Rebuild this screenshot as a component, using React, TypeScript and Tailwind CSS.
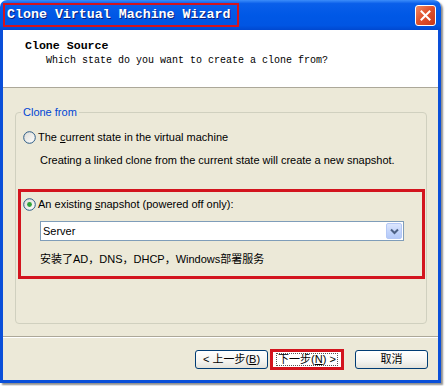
import React from "react";

function Radio({ checked }: { checked?: boolean }) {
  return (
    <svg width="13" height="13" viewBox="0 0 13 13" className="shrink-0">
      <defs>
        <linearGradient id={checked ? "rg1" : "rg0"} x1="0" y1="0" x2="1" y2="1">
          <stop offset="0" stopColor="#DCDBD5" />
          <stop offset="1" stopColor="#FFFFFF" />
        </linearGradient>
      </defs>
      <circle cx="6.5" cy="6.5" r="5.8" fill={`url(#${checked ? "rg1" : "rg0"})`} stroke="#2A5A85" strokeWidth="1" />
      {checked && <circle cx="6.5" cy="6.5" r="2.4" fill="#2FA33A" />}
    </svg>
  );
}

export default function App() {
  return (
    <div className="w-[445px] h-[386px] bg-white font-['Liberation_Sans','Noto_Sans_CJK_SC',sans-serif] text-black">
      <div className="w-[441px] h-[383px] flex flex-col rounded-t-[7px] overflow-hidden shadow-[2px_2px_2px_rgba(0,0,0,0.45)]">
        {/* Title bar */}
        <div className="h-[30px] shrink-0 flex items-start bg-[linear-gradient(to_bottom,#3C8DFA_0%,#0A5FEA_12%,#0058E6_50%,#0055E3_85%,#0048D0_100%)]">
          <div className="ml-[3px] mt-[3px] w-[236px] h-[24px] border-[2px] border-[#D3141E] flex items-center pl-[2px]">
            <span className="font-['Liberation_Mono',monospace] font-bold text-[13.3px] leading-none text-white [text-shadow:1px_1px_0_#0A1E7A]">
              Clone Virtual Machine Wizard
            </span>
          </div>
          <div className="ml-auto mr-[5px] mt-[5px] w-[21px] h-[21px] rounded-[3px] border border-white bg-[linear-gradient(135deg,#F08A64_0%,#E0532E_45%,#C8381A_100%)] flex items-center justify-center">
            <svg width="11" height="11" viewBox="0 0 11 11">
              <path d="M1.5 1.5 L9.5 9.5 M9.5 1.5 L1.5 9.5" stroke="white" strokeWidth="2" strokeLinecap="square" />
            </svg>
          </div>
        </div>

        {/* Client */}
        <div className="flex-1 flex flex-col border-x-[3px] border-b-[3px] border-[#0A4FD9]">
          {/* Header */}
          <div className="h-[58px] shrink-0 bg-white border-b border-[#ACA899] pl-[22px] pt-[9px]">
            <div className="font-['Liberation_Mono',monospace] font-bold text-[11.6px] leading-[14px]">Clone Source</div>
            <div className="ml-[21px] mt-[2px] font-['Liberation_Mono',monospace] text-[10px] leading-[12px]">
              Which state do you want to create a clone from?
            </div>
          </div>

          {/* Body */}
          <div className="flex-1 bg-[#ECE9D8] flex flex-col">
            <div className="relative mt-[24px] ml-[12px] w-[412px] h-[212px] shrink-0 border border-[#D0D0BF] rounded-[4px] px-[2px]">
              <div className="absolute top-[-8px] left-[5px] px-[2px] bg-[#ECE9D8] text-[#0046D5] text-[11px] leading-[14px]">
                Clone from
              </div>
              <div className="mt-[18px] pl-[5px] flex items-center h-[13px]">
                <Radio />
                <span className="ml-[2px] text-[11px] leading-[13px]">
                  The <span className="underline">c</span>urrent state in the virtual machine
                </span>
              </div>
              <div className="mt-[10px] pl-[22px] text-[11px] leading-[13px]">
                Creating a linked clone from the current state will create a new snapshot.
              </div>

              <div className="mt-[22px] w-[407px] border-[3px] border-[#D3141E] flex flex-col">
                <div className="mt-[6px] pl-[2px] flex items-center h-[13px]">
                  <Radio checked />
                  <span className="ml-[2px] text-[11px] leading-[13px]">
                    An existing <span className="underline">s</span>napshot (powered off only):
                  </span>
                </div>
                <div className="mt-[10px] ml-[19px] w-[364px] h-[20px] bg-white border border-[#7F9DB9] flex items-center">
                  <span className="pl-[2px] text-[11px] leading-[13px] flex-1">Server</span>
                  <div className="mr-[1px] w-[16px] h-[16px] rounded-[2px] border border-[#B4C8F6] bg-[linear-gradient(to_bottom,#DCE6FD_0%,#C1D3FB_60%,#B4C9F8_100%)] flex items-center justify-center">
                    <svg width="9" height="7" viewBox="0 0 9 7">
                      <path d="M1 1.5 L4.5 5 L8 1.5" fill="none" stroke="#4D6185" strokeWidth="2" />
                    </svg>
                  </div>
                </div>
                <div className="mt-[11px] pl-[19px] pb-[10px] text-[11px] leading-[14px]">
                  安装了AD，DNS，DHCP，Windows部署服务
                </div>
              </div>
            </div>

            <div className="mt-[12px] h-[2px] border-t border-[#ACA899] border-b border-b-white" />

            <div className="mt-[11px] flex items-center justify-end pr-[10px]">
              <div className="w-[73px] h-[19px] rounded-[3px] border border-[#003C74] bg-[linear-gradient(to_bottom,#FFFFFF_0%,#F4F4F0_60%,#E3E2DA_100%)] flex items-center justify-center text-[11px] leading-none">
                &lt; 上一步(<span className="underline">B</span>)
              </div>
              <div className="ml-[2px] w-[74px] h-[21px] border-[3px] border-[#D3141E] bg-white flex items-center justify-center">
                <div className="px-[1px] border border-dotted border-[#555] text-[11px] leading-[11px]">
                  下一步(<span className="underline">N</span>) &gt;
                </div>
              </div>
              <div className="ml-[11px] w-[73px] h-[19px] rounded-[3px] border border-[#003C74] bg-[linear-gradient(to_bottom,#FFFFFF_0%,#F4F4F0_60%,#E3E2DA_100%)] flex items-center justify-center text-[11px] leading-none">
                取消
              </div>
            </div>
          </div>
        </div>
      </div>
    </div>
  );
}
